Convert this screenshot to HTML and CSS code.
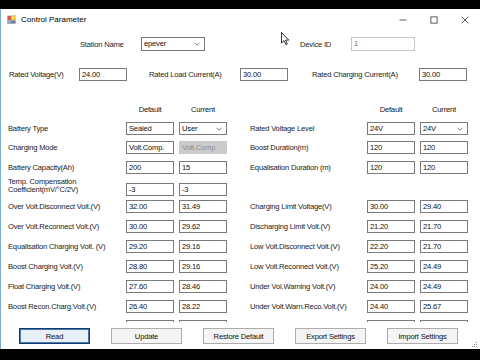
FILE: index.html
```html
<!DOCTYPE html>
<html>
<head>
<meta charset="utf-8">
<title>Control Parameter</title>
<link rel="stylesheet" href="styles.css">
</head>
<body>
<div class="screen">
  <div class="window">
    <div class="titlebar">
      <svg class="app-icon" width="9" height="9" viewBox="0 0 9 9">
        <rect x="0" y="0" width="9" height="9" fill="#d8d8d8"/>
        <rect x="0.5" y="1" width="3.5" height="4" fill="#d9534f"/>
        <rect x="4" y="0.5" width="4.5" height="5" fill="#f0c020"/>
        <rect x="5" y="1.5" width="2.5" height="2.5" fill="#f7e27a"/>
        <rect x="0.5" y="5.5" width="8" height="3" fill="#6b7fa0"/>
        <rect x="1.5" y="6.3" width="2" height="1.4" fill="#c9d3e0"/>
      </svg>
      <span class="title">Control Parameter</span>
      <div class="controls">
        <div class="ctl"><svg width="8" height="8" viewBox="0 0 8 8"><line x1="0.5" y1="4" x2="7.5" y2="4" stroke="#333" stroke-width="0.8"/></svg></div>
        <div class="ctl"><svg width="8" height="8" viewBox="0 0 8 8"><rect x="0.9" y="0.9" width="6.2" height="6.2" fill="none" stroke="#333" stroke-width="0.8"/></svg></div>
        <div class="ctl"><svg width="8" height="8" viewBox="0 0 8 8"><path d="M0.7 0.7 L7.3 7.3 M7.3 0.7 L0.7 7.3" stroke="#333" stroke-width="0.8"/></svg></div>
      </div>
    </div>

    <div class="row-station">
      <span class="lbl lbl-station">Station Name</span>
      <div class="combo w64"><span>epever</span><svg class="chev" width="6" height="4" viewBox="0 0 6 4"><polyline points="0.5,0.7 3,3.2 5.5,0.7" fill="none" stroke="#555" stroke-width="0.8"/></svg></div>
      <span class="lbl lbl-device">Device ID</span>
      <div class="tb w64 disabled">1</div>
    </div>

    <div class="row-rated">
      <span class="lbl lbl-rv">Rated Voltage(V)</span>
      <div class="tb w48">24.00</div>
      <span class="lbl lbl-rl">Rated Load Current(A)</span>
      <div class="tb w48">30.00</div>
      <span class="lbl lbl-rc">Rated Charging Current(A)</span>
      <div class="tb w48">30.00</div>
    </div>

    <div class="panel">
      <div class="trow head">
        <div class="half left"><span></span><span class="colhead">Default</span><span class="colhead">Current</span></div>
        <div class="half right"><span></span><span class="colhead">Default</span><span class="colhead">Current</span></div>
      </div>

      <div class="trow r1">
        <div class="half left"><span class="lbl">Battery Type</span><div class="tb">Sealed</div><div class="combo"><span>User</span><svg class="chev" width="6" height="4" viewBox="0 0 6 4"><polyline points="0.5,0.7 3,3.2 5.5,0.7" fill="none" stroke="#555" stroke-width="0.8"/></svg></div></div>
        <div class="half right"><span class="lbl">Rated Voltage Level</span><div class="tb">24V</div><div class="combo"><span>24V</span><svg class="chev" width="6" height="4" viewBox="0 0 6 4"><polyline points="0.5,0.7 3,3.2 5.5,0.7" fill="none" stroke="#555" stroke-width="0.8"/></svg></div></div>
      </div>
      <div class="trow r2">
        <div class="half left"><span class="lbl">Charging Mode</span><div class="tb">Volt.Comp.</div><div class="combo disabled"><span>Volt.Comp</span></div></div>
        <div class="half right"><span class="lbl">Boost Duration(m)</span><div class="tb">120</div><div class="tb">120</div></div>
      </div>
      <div class="trow r3">
        <div class="half left"><span class="lbl">Battery Capacity(Ah)</span><div class="tb">200</div><div class="tb">15</div></div>
        <div class="half right"><span class="lbl">Equalisation Duration (m)</span><div class="tb">120</div><div class="tb">120</div></div>
      </div>
      <div class="trow r4">
        <div class="half left"><span class="lbl two">Temp. Compensation<br>Coefficient(mV/°C/2V)</span><div class="tb">-3</div><div class="tb">-3</div></div>
        <div class="half right"></div>
      </div>
      <div class="trow r5">
        <div class="half left"><span class="lbl">Over Volt.Disconnect Volt.(V)</span><div class="tb">32.00</div><div class="tb">31.49</div></div>
        <div class="half right"><span class="lbl">Charging Limit Voltage(V)</span><div class="tb">30.00</div><div class="tb">29.40</div></div>
      </div>
      <div class="trow">
        <div class="half left"><span class="lbl">Over Volt.Reconnect Volt.(V)</span><div class="tb">30.00</div><div class="tb">29.62</div></div>
        <div class="half right"><span class="lbl">Discharging Limit Volt.(V)</span><div class="tb">21.20</div><div class="tb">21.70</div></div>
      </div>
      <div class="trow">
        <div class="half left"><span class="lbl">Equalisation Charging Volt. (V)</span><div class="tb">29.20</div><div class="tb">29.16</div></div>
        <div class="half right"><span class="lbl">Low Volt.Disconnect Volt.(V)</span><div class="tb">22.20</div><div class="tb">21.70</div></div>
      </div>
      <div class="trow">
        <div class="half left"><span class="lbl">Boost Charging Volt.(V)</span><div class="tb">28.80</div><div class="tb">29.16</div></div>
        <div class="half right"><span class="lbl">Low Volt.Reconnect Volt.(V)</span><div class="tb">25.20</div><div class="tb">24.49</div></div>
      </div>
      <div class="trow">
        <div class="half left"><span class="lbl">Float Charging Volt.(V)</span><div class="tb">27.60</div><div class="tb">28.46</div></div>
        <div class="half right"><span class="lbl">Under Vol.Warning Volt.(V)</span><div class="tb">24.00</div><div class="tb">24.49</div></div>
      </div>
      <div class="trow">
        <div class="half left"><span class="lbl">Boost Recon.Charg.Volt.(V)</span><div class="tb">26.40</div><div class="tb">28.22</div></div>
        <div class="half right"><span class="lbl">Under Volt.Warn.Reco.Volt.(V)</span><div class="tb">24.40</div><div class="tb">25.67</div></div>
      </div>
      <div class="trow">
        <div class="half left"><span></span><div class="tb"></div><div class="tb"></div></div>
        <div class="half right"><span></span><div class="tb"></div><div class="tb"></div></div>
      </div>
    </div>

    <div class="buttons">
      <div class="btn primary">Read</div>
      <div class="btn">Update</div>
      <div class="btn">Restore Default</div>
      <div class="btn">Export Settings</div>
      <div class="btn">Import Settings</div>
    </div>

    <svg class="grip" width="6" height="6" viewBox="0 0 6 6">
      <rect x="4" y="0" width="1" height="1" fill="#888"/>
      <rect x="2" y="2" width="1" height="1" fill="#888"/>
      <rect x="4" y="2" width="1" height="1" fill="#888"/>
      <rect x="0" y="4" width="1" height="1" fill="#888"/>
      <rect x="2" y="4" width="1" height="1" fill="#888"/>
      <rect x="4" y="4" width="1" height="1" fill="#888"/>
    </svg>
  </div>
</div>

<svg class="cursor" width="9" height="14" viewBox="0 0 9 14">
  <path d="M0.5 0.5 L0.5 11 L3 8.6 L4.8 12.6 L6.3 12 L4.6 8.1 L7.8 8.1 Z" fill="#fff" stroke="#000" stroke-width="0.8" stroke-linejoin="round"/>
</svg>
</body>
</html>
```

FILE: styles.css
```css
html, body {
  margin: 0;
  padding: 0;
}

body {
  background: #000;
  width: 480px;
  height: 360px;
  overflow: hidden;
  font-family: "Liberation Sans", Arial, sans-serif;
  color: #111;
  position: relative;
}

.screen {
  padding-top: 9px;
}

.window {
  position: relative;
  height: 340px;
  background: #fff;
  border-left: 1px solid #7aaed4;
  box-sizing: border-box;
  display: flex;
  flex-direction: column;
  overflow: hidden;
}

/* title bar */
.titlebar {
  height: 21px;
  display: flex;
  align-items: center;
}

.app-icon {
  margin-left: 6px;
  flex: none;
}

.title {
  margin-left: 5px;
  font-size: 8px;
  color: #000;
}

.controls {
  margin-left: auto;
  display: flex;
  height: 21px;
}

.ctl {
  width: 31px;
  display: flex;
  align-items: center;
  justify-content: center;
}

/* common widgets */
.lbl {
  font-size: 7.6px;
  letter-spacing: -0.2px;
  white-space: nowrap;
  color: #1a1a1a;
}

.tb,
.combo {
  height: 13px;
  box-sizing: border-box;
  border: 1px solid #7a7a7a;
  background: #fff;
  font-size: 7.6px;
  letter-spacing: -0.2px;
  line-height: 11px;
  padding-left: 2px;
  white-space: nowrap;
  overflow: hidden;
  color: #111;
}

.combo {
  display: flex;
  align-items: center;
  justify-content: space-between;
  padding-right: 4px;
}

.combo.disabled {
  background: #cbcbcb;
  border-color: #cbcbcb;
  color: #8e8e8e;
}

.tb.disabled {
  border-color: #c8c8c8;
  color: #777;
}

.chev {
  flex: none;
}

.w64 { width: 64px; }
.w48 { width: 48px; }

/* top rows */
.row-station {
  display: flex;
  align-items: center;
  height: 14px;
  margin-top: 7px;
  padding-left: 79px;
}

.row-station .tb,
.row-station .combo {
  height: 14px;
  line-height: 12px;
}

.lbl-station { width: 61px; }
.lbl-device { width: 51px; margin-left: 95px; }

.row-rated {
  display: flex;
  align-items: center;
  height: 13px;
  margin-top: 17px;
  padding-left: 8px;
}

.lbl-rv { width: 70px; }
.lbl-rl { width: 91px; margin-left: 22px; }
.lbl-rc { width: 107px; margin-left: 24px; }

/* parameter panel */
.panel {
  margin-top: 22px;
  height: 219px;
  overflow: hidden;
  padding-left: 7px;
  flex: none;
}

.trow {
  display: flex;
  gap: 23px;
  height: 13px;
  margin-top: 7px;
}

.trow.head { margin-top: 0; }
.trow.r1 { margin-top: 6px; }
.trow.r2 { margin-top: 6px; }
.trow.r3 { margin-top: 7px; }
.trow.r4 { margin-top: 9px; }
.trow.r5 { margin-top: 4px; }

.half {
  display: grid;
  column-gap: 5px;
  align-items: center;
  height: 13px;
}

.half.left { grid-template-columns: 113px 48px 48px; width: 219px; }
.half.right { grid-template-columns: 112px 48px 48px; width: 218px; }

.colhead {
  font-size: 7.6px;
  letter-spacing: -0.2px;
  text-align: center;
  color: #111;
}

.lbl.two {
  line-height: 8px;
  align-self: start;
  margin-top: -5px;
}

/* buttons */
.buttons {
  display: flex;
  gap: 21px;
  margin-top: 6px;
  padding-left: 18px;
}

.btn {
  width: 71px;
  height: 16px;
  box-sizing: border-box;
  border: 1px solid #adadad;
  background: #f4f4f4;
  font-size: 7.6px;
  letter-spacing: -0.2px;
  display: flex;
  align-items: center;
  justify-content: center;
  color: #111;
}

.btn.primary {
  border: 1px solid #0d3b72;
  box-shadow: inset 0 0 0 1px #4a76a8;
  background: #e8eff7;
}

.grip {
  position: absolute;
  right: 2px;
  bottom: 1px;
}

.cursor {
  position: absolute;
  left: 281px;
  top: 32px;
}
```
